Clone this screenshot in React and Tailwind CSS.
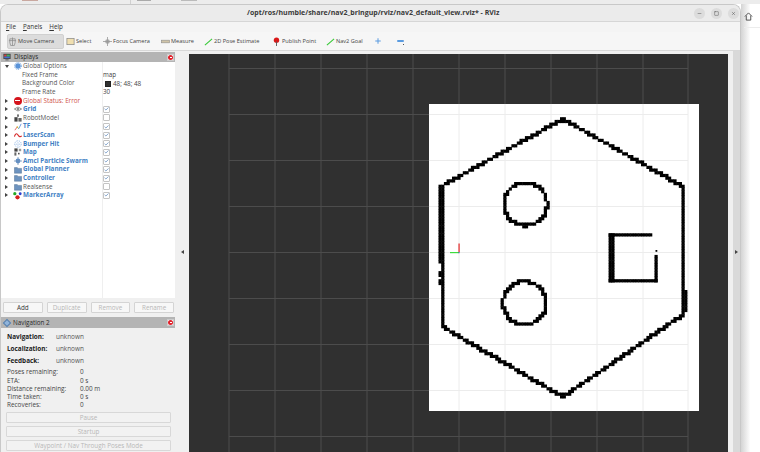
import React from "react";
import { Check, Minus, Square, X, Plus } from "lucide-react";

const CELL = 2.7;

// walls of the occupancy map are made of square cells
const cellsAlong = (points) => {
  const seen = new Set();
  const out = [];
  for (let i = 0; i < points.length - 1; i++) {
    const [x1, y1] = points[i];
    const [x2, y2] = points[i + 1];
    const steps = Math.max(1, Math.ceil(Math.hypot(x2 - x1, y2 - y1)));
    for (let s = 0; s <= steps; s++) {
      const x = Math.round((x1 + ((x2 - x1) * s) / steps) / CELL);
      const y = Math.round((y1 + ((y2 - y1) * s) / steps) / CELL);
      const key = `${x}_${y}`;
      if (!seen.has(key)) {
        seen.add(key);
        out.push([x * CELL, y * CELL]);
      }
    }
  }
  return out;
};

const circle = (cx, cy, r) => {
  const pts = [];
  for (let a = 0; a <= 64; a++) {
    pts.push([cx + r * Math.cos((a / 64) * Math.PI * 2), cy + r * Math.sin((a / 64) * Math.PI * 2)]);
  }
  return pts;
};

const walls = [
  ...cellsAlong([
    [442, 186],
    [563, 119],
    [684, 187],
    [684, 314],
    [563, 397],
    [443, 327],
    [443, 186],
  ]),
  ...cellsAlong([[441, 186], [441, 263]]),
  ...cellsAlong([[441, 272], [441, 276]]),
  ...cellsAlong([[441, 281], [441, 283]]),
  ...cellsAlong([[686, 291], [686, 311]]),
  ...cellsAlong(circle(525.5, 204, 21.5)),
  ...cellsAlong(circle(524.5, 303, 21.5)),
  ...cellsAlong([[611, 236], [652, 236]]),
  ...cellsAlong([[611, 281], [657, 281]]),
  ...cellsAlong([[611, 236], [611, 281]]),
  ...cellsAlong([[613, 236], [613, 281]]),
  ...cellsAlong([[657, 257], [657, 281]]),
];

const gridX = [229, 275, 321, 367, 413, 459, 505, 551, 597, 643, 688];
const gridY = [68.5, 114.5, 160.5, 206.5, 252.5, 298.5, 344.5, 390.5, 436.5];

const MapView = () => (
  <svg viewBox="189 54 539 398" className="h-full w-full block">
    <rect x="189" y="54" width="539" height="398" fill="#303030" />
    {gridX.map((x) => (
      <line key={x} x1={x} x2={x} y1="54" y2="452" stroke="#4c4c4c" strokeWidth="1" />
    ))}
    {gridY.map((y) => (
      <line key={y} x1="229" x2="688" y1={y} y2={y} stroke="#4c4c4c" strokeWidth="1" />
    ))}
    <rect x="429" y="104" width="270" height="307" fill="#ffffff" />
    {gridX.filter((x) => x > 429).map((x) => (
      <line key={x} x1={x} x2={x} y1="104" y2="411" stroke="#ececec" strokeWidth="1" />
    ))}
    {gridY.filter((y) => y > 104 && y < 411).map((y) => (
      <line key={y} x1="429" x2="688" y1={y} y2={y} stroke="#ececec" strokeWidth="1" />
    ))}
    {walls.map(([x, y], i) => (
      <rect key={i} x={x - 1.6} y={y - 1.6} width="3.2" height="3.2" fill="#000000" />
    ))}
    <rect x="655.5" y="250" width="1.8" height="1.8" fill="#000000" />
    <rect x="450" y="252" width="9" height="1.2" fill="#3ddc3d" />
    <rect x="458.2" y="243.5" width="1.8" height="8.5" fill="#e86a6a" />
    <rect x="458.6" y="252" width="1" height="1.2" fill="#3050c0" />
  </svg>
);

const Tool = ({ icon, label, active, className = "" }) => (
  <div
    className={`shrink-0 flex items-center gap-[1px] h-[15px] ${active ? "bg-[#dcdcdc] rounded-[2px] border border-[#d0d0d0]" : ""} ${className}`}
  >
    {icon}
    <span className="text-[5.6px] text-[#444] whitespace-nowrap">{label}</span>
  </div>
);

const ToolIcon = ({ children }) => (
  <svg viewBox="0 0 10 10" className="w-[9px] h-[9px] shrink-0">
    {children}
  </svg>
);

const CloseBtn = () => (
  <div className="w-[7px] h-[7px] bg-white border border-[#ccc] flex items-center justify-center">
    <div className="w-[5px] h-[5px] rounded-full bg-[#e0202a] flex items-center justify-center">
      <div className="w-[2px] h-[1px] bg-white" />
    </div>
  </div>
);

const Folder = () => (
  <svg viewBox="0 0 10 10" className="w-[8px] h-[8px]">
    <path d="M0.5 2h3.5l1 1h4.5v6h-9z" fill="#6d93bf" stroke="#54708f" strokeWidth="0.6" />
  </svg>
);

const icons = {
  options: (
    <svg viewBox="0 0 10 10" className="w-[8px] h-[8px]">
      <circle cx="5" cy="5" r="3.4" fill="#5a93d8" />
      <circle cx="5" cy="5" r="4.4" fill="none" stroke="#5a93d8" strokeWidth="1" strokeDasharray="1.4 1.4" />
    </svg>
  ),
  error: (
    <div className="w-[8px] h-[8px] rounded-full bg-[#d5141c] flex items-center justify-center">
      <div className="w-[5px] h-[1.5px] bg-white" />
    </div>
  ),
  grid: (
    <svg viewBox="0 0 10 10" className="w-[8px] h-[8px]">
      <path d="M0.5 5 5 2.5 9.5 5 5 7.5z" fill="none" stroke="#666" strokeWidth="0.9" />
      <circle cx="5" cy="5" r="1.1" fill="#555" />
    </svg>
  ),
  robot: (
    <svg viewBox="0 0 10 10" className="w-[8px] h-[8px]">
      <rect x="4" y="0.5" width="2" height="3" fill="#555" />
      <rect x="0.5" y="4" width="4" height="5.5" fill="#444" />
      <rect x="5.5" y="5" width="4" height="4.5" fill="#666" />
    </svg>
  ),
  tf: (
    <svg viewBox="0 0 10 10" className="w-[8px] h-[8px]">
      <path d="M1 9 4 5" stroke="#e04a4a" strokeWidth="1" />
      <path d="M4 5 6 7" stroke="#3bb83b" strokeWidth="1" />
      <path d="M6 7 9 1" stroke="#4a80d8" strokeWidth="1" />
      <circle cx="4" cy="5" r="1" fill="#e6b030" />
    </svg>
  ),
  laser: (
    <svg viewBox="0 0 10 10" className="w-[8px] h-[8px]">
      <path d="M0.5 7C2 2 4 3 5 5s3 3 4.5 1" fill="none" stroke="#d62a2a" strokeWidth="1.4" />
    </svg>
  ),
  bumper: (
    <svg viewBox="0 0 10 10" className="w-[8px] h-[8px]">
      <circle cx="5" cy="5" r="4" fill="none" stroke="#5a93d8" strokeWidth="1" strokeDasharray="1 1.2" />
      <circle cx="5" cy="5" r="1.6" fill="none" stroke="#5a93d8" strokeWidth="0.8" strokeDasharray="1 0.8" />
    </svg>
  ),
  map: (
    <svg viewBox="0 0 10 10" className="w-[8px] h-[8px]">
      <rect x="0.5" y="0.5" width="4" height="4" fill="#444" />
      <rect x="6" y="1" width="3" height="3" fill="#999" />
      <rect x="0.5" y="5.5" width="2.5" height="4" fill="#666" />
      <rect x="5" y="6" width="2" height="2" fill="#555" />
    </svg>
  ),
  amcl: (
    <svg viewBox="0 0 10 10" className="w-[8px] h-[8px]">
      <circle cx="5" cy="5" r="3" fill="#5f8fc8" />
      <path d="M5 0v10M0 5h10" stroke="#6d8fb8" strokeWidth="1" />
    </svg>
  ),
  folder: <Folder />,
  marker: (
    <svg viewBox="0 0 10 10" className="w-[9px] h-[9px]">
      <circle cx="2" cy="3" r="1.8" fill="#24a824" />
      <circle cx="8" cy="3" r="1.6" fill="#2a3fd0" />
      <circle cx="5" cy="7" r="2.4" fill="#d81f1f" />
    </svg>
  ),
};

const displays = [
  { icon: "grid", label: "Grid", on: true, bold: true },
  { icon: "robot", label: "RobotModel", on: false },
  { icon: "tf", label: "TF", on: true, bold: true },
  { icon: "laser", label: "LaserScan", on: true, bold: true },
  { icon: "bumper", label: "Bumper Hit", on: true, bold: true },
  { icon: "map", label: "Map", on: true, bold: true },
  { icon: "amcl", label: "Amcl Particle Swarm", on: true, bold: true },
  { icon: "folder", label: "Global Planner", on: true, bold: true },
  { icon: "folder", label: "Controller", on: true, bold: true },
  { icon: "folder", label: "Realsense", on: false },
  { icon: "marker", label: "MarkerArray", on: true, bold: true },
];

const Row = ({ arrow, icon, label, labelClass = "text-[#555]", indent, children }) => (
  <div className="h-[8.62px] flex items-center">
    <div className="w-[102px] shrink-0 flex items-center h-full">
      <div className="w-[11px] shrink-0 flex justify-center">
        {arrow === "right" && <div className="border-y-[2px] border-y-transparent border-l-[3px] border-l-[#444]" />}
        {arrow === "down" && <div className="border-x-[2px] border-x-transparent border-t-[3px] border-t-[#444]" />}
      </div>
      <div className={indent ? "w-[10px] shrink-0" : "w-[11px] shrink-0 flex justify-center"}>{icon}</div>
      <span className={`text-[6.3px] leading-none whitespace-nowrap ${labelClass}`}>{label}</span>
    </div>
    <div className="flex-1 flex items-center h-full text-[6.3px] text-[#444]">{children}</div>
  </div>
);

const Tick = ({ on }) => (
  <div className="w-[7px] h-[7px] bg-white border border-[#c4c4c4] rounded-[1px] flex items-center justify-center">
    {on && <Check size={6} strokeWidth={3} className="text-[#3f72b0]" />}
  </div>
);

const SmallBtn = ({ children, disabled }) => (
  <div
    className={`flex-1 h-[11px] flex items-center justify-center rounded-[1px] border border-[#d4d4d4] bg-[#f7f7f7] text-[6.3px] ${disabled ? "text-[#b8b8b8]" : "text-[#333]"}`}
  >
    {children}
  </div>
);

const WideBtn = ({ children }) => (
  <div className="h-[11px] flex items-center justify-center rounded-[1px] border border-[#d8d8d8] bg-[#f2f2f2] text-[6.3px] text-[#b8b8b8]">
    {children}
  </div>
);

const Stat = ({ label, value }) => (
  <div className="h-[8.25px] flex items-center text-[6.4px] text-[#444]">
    <span className="w-[73px]">{label}</span>
    <span>{value}</span>
  </div>
);

const NavLine = ({ label, value }) => (
  <div className="h-[12px] flex items-center text-[6.4px]">
    <span className="w-[49px] font-bold text-[#222]">{label}</span>
    <span className="text-[#555]">{value}</span>
  </div>
);

const Arrow = ({ side }) => (
  <div
    className={`border-y-[2px] border-y-transparent ${side === "left" ? "border-r-[3px] border-r-[#444]" : "border-l-[3px] border-l-[#444]"}`}
  />
);

export default function App() {
  return (
    <div
      className="w-[760px] h-[452px] overflow-hidden bg-white flex flex-col relative"
      style={{ fontFamily: '"Open Sans", "Noto Sans", sans-serif' }}
    >
      <div className="h-[4px] shrink-0 bg-[#ececec] flex items-start">
        <div className="ml-[22px] w-[16px] h-[1px] bg-[#c9a8a0]" />
        <div className="ml-[22px] w-[50px] h-[1px] bg-[#bbb]" />
        <div className="ml-[20px] w-[1px] h-[4px] bg-[#d0d0d0]" />
        <div className="ml-[6px] w-[14px] h-[1px] bg-[#aaa]" />
        <div className="ml-[30px] w-[16px] h-[1px] bg-[#bbb]" />
      </div>
      <div className="flex-1 flex min-h-0">
        <div className="w-[741px] shrink-0 flex flex-col rounded-t-[8px] border-t border-x border-[#c8c8c8] bg-[#f0f0f0] overflow-hidden">
          {/* title bar */}
          <div className="h-[17px] shrink-0 bg-[#ebebeb] border-b border-[#d6d6d6] flex items-center relative">
            <div className="w-full pl-[246px] text-[7px] font-bold text-[#3a3a3a] whitespace-nowrap">
              /opt/ros/humble/share/nav2_bringup/rviz/nav2_default_view.rviz* - RViz
            </div>
            <div className="absolute right-[1px] top-[3px] flex gap-[6px]">
              {[Minus, Square, X].map((Icon, i) => (
                <div key={i} className="w-[11px] h-[11px] rounded-full bg-[#dcdcdc] flex items-center justify-center">
                  <Icon size={5} strokeWidth={2} className="text-[#444]" />
                </div>
              ))}
            </div>
          </div>
          {/* menu */}
          <div className="h-[10px] shrink-0 bg-[#f4f4f4] flex items-center gap-[7px] pl-[5px] text-[6.3px] text-[#333]">
            <span><span className="underline decoration-[0.5px] underline-offset-1">F</span>ile</span>
            <span><span className="underline decoration-[0.5px] underline-offset-1">P</span>anels</span>
            <span><span className="underline decoration-[0.5px] underline-offset-1">H</span>elp</span>
          </div>
          {/* toolbar */}
          <div className="h-[19px] shrink-0 bg-[#f6f6f6] border-b border-[#d8d8d8] flex items-center pl-[6px]">
            <Tool
              active
              className="w-[57px] mr-[2px]"
              label="Move Camera"
              icon={
                <ToolIcon>
                  <path d="M5 0.5v9M1 4h8M2 2h6v4l-1 3.5H3L2 6z" fill="none" stroke="#888" strokeWidth="0.8" />
                </ToolIcon>
              }
            />
            <Tool
              className="w-[37px]"
              label="Select"
              icon={
                <ToolIcon>
                  <rect x="1" y="1.5" width="8" height="7" fill="#f0dfb0" stroke="#888" strokeWidth="0.8" />
                </ToolIcon>
              }
            />
            <Tool
              className="w-[58px]"
              label="Focus Camera"
              icon={
                <ToolIcon>
                  <circle cx="5" cy="5" r="2.6" fill="#aaa" />
                  <path d="M5 0v10M0 5h10" stroke="#999" strokeWidth="0.9" />
                </ToolIcon>
              }
            />
            <Tool
              className="w-[43px]"
              label="Measure"
              icon={
                <ToolIcon>
                  <rect x="0.5" y="3.5" width="9" height="3" fill="#d0c4a8" stroke="#888" strokeWidth="0.6" />
                </ToolIcon>
              }
            />
            <Tool
              className="w-[68px]"
              label="2D Pose Estimate"
              icon={
                <ToolIcon>
                  <path d="M1 9 9 2" stroke="#35c935" strokeWidth="1.2" />
                </ToolIcon>
              }
            />
            <Tool
              className="w-[54px]"
              label="Publish Point"
              icon={
                <ToolIcon>
                  <circle cx="5" cy="3.5" r="3" fill="#d91818" />
                  <path d="M5 5v5" stroke="#555" strokeWidth="1" />
                </ToolIcon>
              }
            />
            <Tool
              className="w-[48px]"
              label="Nav2 Goal"
              icon={
                <ToolIcon>
                  <path d="M1 9 9 2" stroke="#35c935" strokeWidth="1.2" />
                </ToolIcon>
              }
            />
            <Plus size={8} strokeWidth={3} className="text-[#5a9be0]" />
            <div className="ml-[15px] relative w-[7px] h-[2px] bg-[#5a9be0] rounded-[1px]">
              <div className="absolute left-[6px] top-[4px] w-[1px] h-[1px] bg-[#555]" />
            </div>
          </div>
          {/* main */}
          <div className="flex-1 flex min-h-0">
            <div className="w-[174px] shrink-0 flex flex-col">
              <div className="h-[10px] mt-[1px] shrink-0 bg-[#b4b4b4] flex items-center pl-[2px] pr-[1px] justify-between">
                <div className="flex items-center gap-[3px] text-[6.3px] text-[#2a2a2a]">
                  <svg viewBox="0 0 10 10" className="w-[8px] h-[8px]">
                    <rect x="0.5" y="1" width="9" height="6.5" fill="#444" />
                    <rect x="1.5" y="2" width="3" height="2.5" fill="#d84040" />
                    <rect x="4.5" y="2" width="4" height="2.5" fill="#40b060" />
                    <rect x="1.5" y="4.5" width="7" height="2" fill="#4070d0" />
                    <rect x="3" y="8" width="4" height="1.2" fill="#555" />
                  </svg>
                  Displays
                </div>
                <CloseBtn />
              </div>
              <div className="h-[236px] shrink-0 bg-white relative">
                <div className="absolute left-[101px] top-0 bottom-0 w-[1px] bg-[#efefef]" />
                <Row arrow="down" icon={icons.options} label="Global Options" />
                <Row indent label="Fixed Frame">
                  map
                </Row>
                <Row indent label="Background Color">
                  <div className="ml-[2px] w-[6px] h-[6px] bg-[#303030] border border-[#222] mr-[2px]" />
                  48; 48; 48
                </Row>
                <Row indent label="Frame Rate">
                  30
                </Row>
                <Row arrow="right" icon={icons.error} label="Global Status: Error" labelClass="text-[#d0524a]" />
                {displays.map((d) => (
                  <Row
                    key={d.label}
                    arrow="right"
                    icon={icons[d.icon]}
                    label={d.label}
                    labelClass={d.bold ? "font-bold text-[#3f7fc4]" : "text-[#555]"}
                  >
                    <Tick on={d.on} />
                  </Row>
                ))}
              </div>
              <div className="h-[19px] shrink-0 flex items-center gap-[4px] pl-[2px] pr-[1px]">
                <SmallBtn>Add</SmallBtn>
                <SmallBtn disabled>Duplicate</SmallBtn>
                <SmallBtn disabled>Remove</SmallBtn>
                <SmallBtn disabled>Rename</SmallBtn>
              </div>
              <div className="h-[11px] shrink-0 bg-[#b4b4b4] flex items-center justify-between pl-[3px] pr-[1px] text-[6.3px] text-[#2a2a2a]">
                <div className="flex items-center gap-[3px]">
                  <div className="w-[6px] h-[6px] rotate-45 bg-[#8fb4dc] border border-[#5a7fa8]" />
                  Navigation 2
                </div>
                <CloseBtn />
              </div>
              <div className="flex-1 pl-[6px] pr-[4px] pt-[3px] flex flex-col">
                <NavLine label="Navigation:" value="unknown" />
                <NavLine label="Localization:" value="unknown" />
                <NavLine label="Feedback:" value="unknown" />
                <div className="h-[1px]" />
                <Stat label="Poses remaining:" value="0" />
                <Stat label="ETA:" value="0 s" />
                <Stat label="Distance remaining:" value="0.00 m" />
                <Stat label="Time taken:" value="0 s" />
                <Stat label="Recoveries:" value="0" />
                <div className="flex flex-col gap-[3px] mt-[3px] ml-[-1px]">
                  <WideBtn>Pause</WideBtn>
                  <WideBtn>Startup</WideBtn>
                  <WideBtn>Waypoint / Nav Through Poses Mode</WideBtn>
                </div>
              </div>
            </div>
            <div className="w-[14px] shrink-0 flex items-center justify-center bg-[#f0f0f0]">
              <Arrow side="left" />
            </div>
            <div className="flex-1 pt-[3px] min-w-0">
              <MapView />
            </div>
            <div className="w-[5px] shrink-0 bg-[#f0f0f0]" />
            <div className="w-[7px] shrink-0 bg-[#d9d9d9] flex items-center justify-center">
              <Arrow side="right" />
            </div>
          </div>
        </div>
        <div className="flex-1 relative bg-gradient-to-r from-[#d4d4d4] via-white to-white">
          <svg viewBox="0 0 10 10" className="absolute left-[3px] top-[8px] w-[9px] h-[9px]">
            <path d="M1 5 5 1l4 4M2.5 4v5h5V4" fill="none" stroke="#444" strokeWidth="1" />
          </svg>
          <div className="absolute left-[3px] right-0 top-[23px] h-[1px] bg-[#ececec]" />
        </div>
      </div>
    </div>
  );
}
